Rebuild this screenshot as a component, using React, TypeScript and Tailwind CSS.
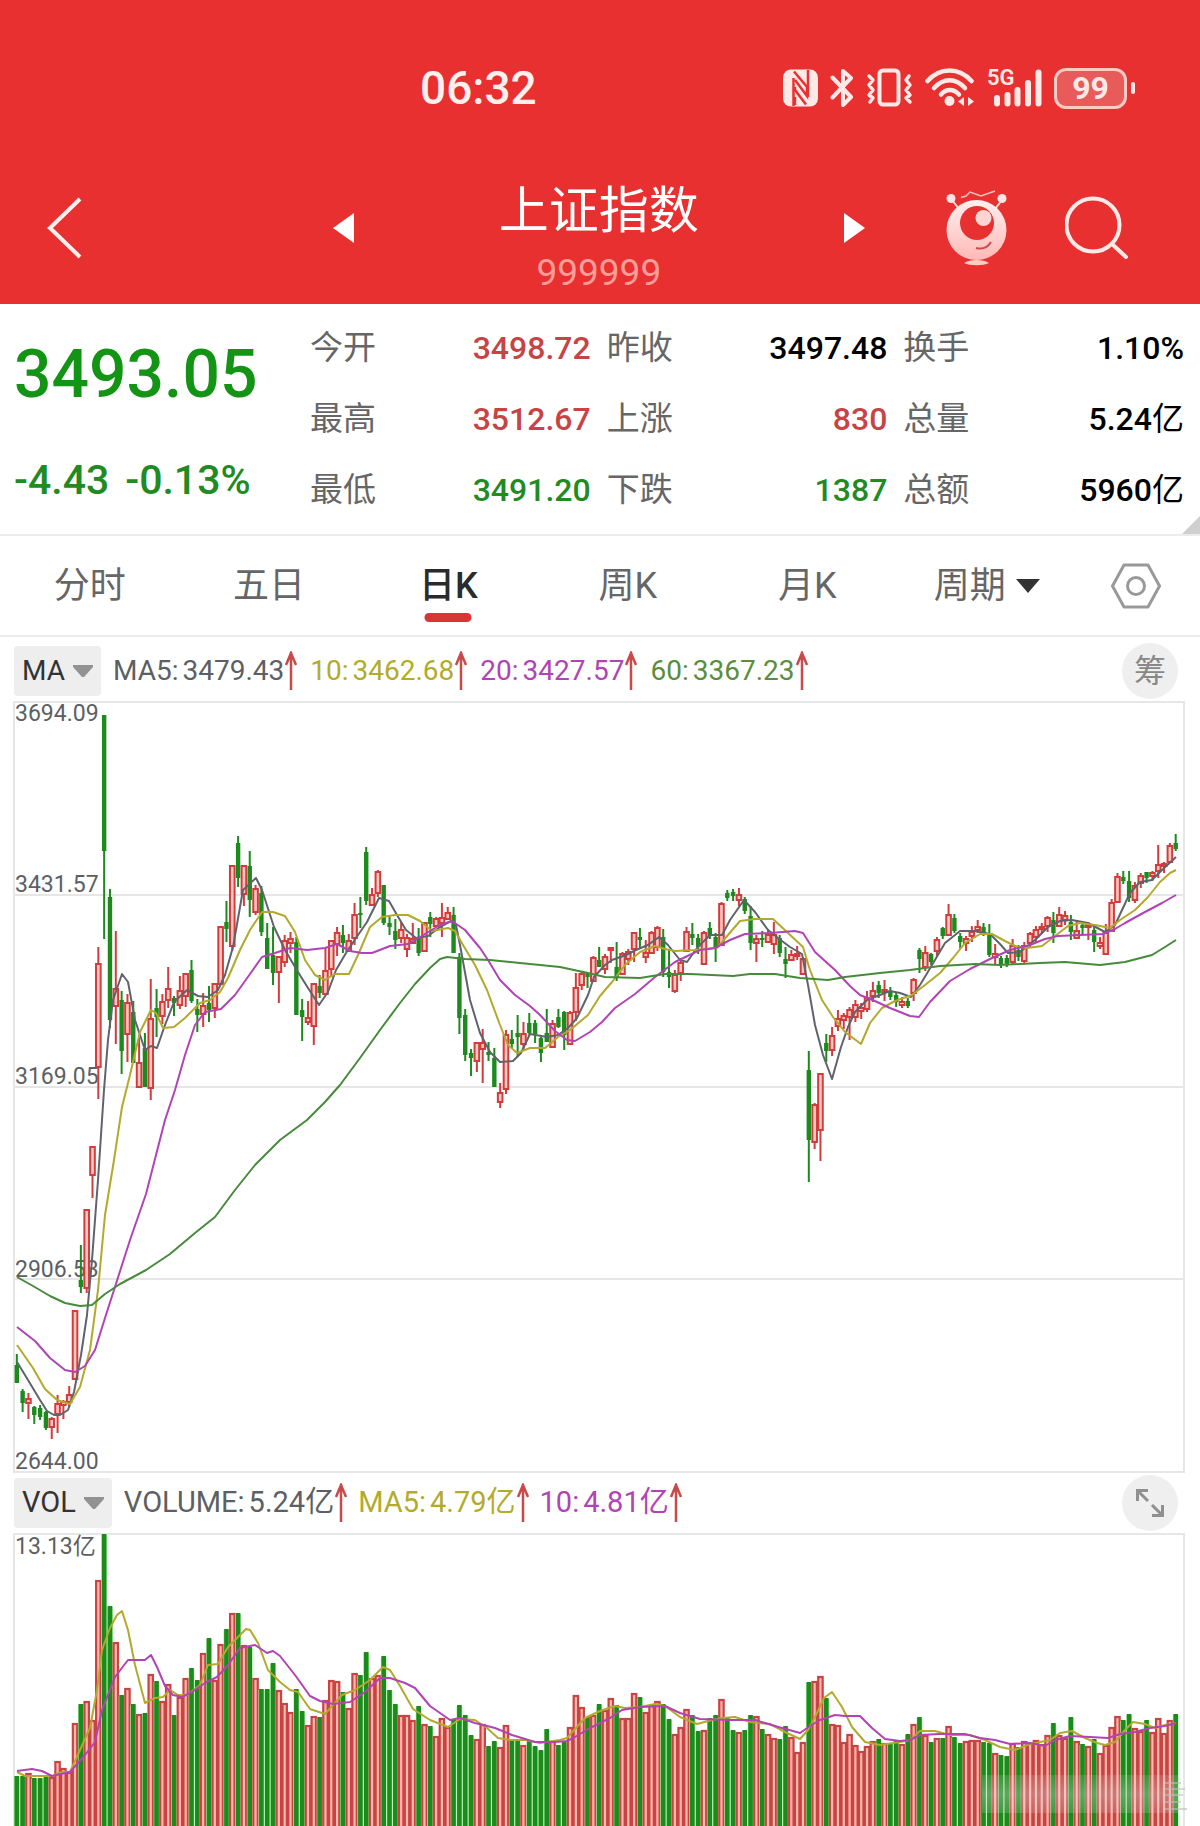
import React from "react";

const FONT = "font-[Roboto,'Noto_Sans_CJK_SC',sans-serif]";

const RED = "#d23c3c";
const GREEN = "#1c8a1c";

/* One entry per trading day: direction, high, body top, body bottom, low, volume top. */
const DAYS = `
G 1354 1365 1383 1383 1776|G 1389 1391 1403 1412 1776|R 1393 1398 1404 1419 1773|G 1406 1407 1415 1424 1778|G 1405 1408 1417 1420 1778
G 1411 1412 1428 1430 1777|R 1417 1418 1428 1439 1777|R 1395 1403 1415 1433 1761|R 1400 1401 1406 1419 1768|R 1386 1394 1403 1407 1772
R 1310 1310 1380 1380 1723|G 1245 1280 1287 1293 1704|R 1209 1209 1289 1293 1701|R 1146 1146 1176 1198 1720|R 947 963 1068 1099 1580
G 715 715 851 939 1534|G 889 897 1020 1028 1606|R 931 988 1007 1044 1642|G 991 1000 1051 1074 1695|R 994 1002 1035 1062 1688
G 1001 1012 1063 1063 1704|R 1035 1062 1088 1088 1714|G 1033 1048 1087 1087 1713|R 979 1018 1089 1100 1674|G 989 1008 1017 1037 1681
R 994 1001 1017 1024 1701|R 967 988 1001 1008 1684|G 996 998 1003 1016 1715|R 976 990 1006 1009 1697|R 973 973 997 1007 1678
G 960 970 1001 1003 1668|G 999 1009 1015 1032 1680|R 993 1005 1015 1027 1653|G 986 1003 1010 1022 1638|R 983 983 1009 1018 1680
R 926 926 985 985 1644|G 901 922 929 942 1629|R 865 865 947 951 1613|G 836 843 878 887 1613|R 865 865 895 906 1645
G 851 866 900 917 1647|R 885 888 913 915 1678|G 886 893 932 936 1689|G 923 938 969 969 1689|G 927 955 973 985 1663
R 956 956 973 1003 1690|R 935 940 963 967 1703|R 932 938 944 953 1712|G 937 942 1015 1015 1689|G 999 1010 1017 1041 1711
R 1001 1017 1023 1025 1725|R 983 983 1027 1045 1716|G 975 986 993 998 1717|R 948 970 995 995 1700|R 940 940 970 977 1680
R 927 932 945 956 1681|G 925 935 943 953 1692|R 934 940 952 952 1708|R 903 914 939 945 1673|G 897 913 915 928 1675
G 847 852 901 905 1652|R 888 894 906 906 1678|R 870 871 894 897 1675|G 885 885 923 925 1656|G 915 923 927 935 1690
G 919 931 940 949 1704|R 922 929 939 943 1715|R 934 937 950 957 1715|R 923 938 944 944 1720|G 928 937 953 956 1706
R 922 922 952 952 1724|G 912 917 924 937 1726|R 917 918 927 927 1736|R 903 917 924 937 1718|R 907 912 920 920 1727
G 907 915 953 953 1719|G 953 957 1018 1034 1705|G 1009 1015 1055 1061 1715|G 1049 1053 1058 1076 1735|R 1042 1042 1062 1072 1739
R 1029 1042 1050 1083 1724|G 1042 1052 1055 1061 1746|G 1048 1058 1087 1087 1741|R 1083 1092 1103 1108 1747|R 1030 1034 1090 1094 1725
G 1030 1039 1044 1048 1740|G 1015 1033 1037 1057 1739|R 1022 1033 1045 1050 1745|G 1013 1023 1033 1035 1741|G 1020 1023 1034 1043 1746
G 1037 1038 1053 1062 1750|G 1009 1033 1042 1042 1729|R 1020 1023 1048 1048 1741|G 1009 1017 1027 1028 1745|G 1011 1012 1035 1050 1742
R 1011 1012 1045 1045 1727|R 973 987 1013 1021 1695|R 972 973 986 990 1707|G 972 973 977 988 1717|R 956 957 982 982 1715
G 947 960 967 967 1704|R 954 956 970 974 1710|R 947 947 951 963 1698|G 942 967 977 981 1705|R 952 953 975 975 1718
R 949 951 960 965 1718|R 932 932 950 962 1693|G 928 937 940 949 1697|R 940 952 958 963 1712|R 931 932 954 954 1705
R 926 927 948 951 1701|G 929 937 972 977 1704|G 949 972 977 988 1719|R 970 974 992 993 1734|R 958 962 974 981 1727
R 927 931 952 952 1709|G 923 934 938 945 1715|G 934 938 947 954 1731|R 931 932 965 965 1730|G 922 928 936 939 1718
G 933 937 947 962 1715|R 902 903 946 946 1699|G 890 893 898 901 1717|G 889 892 896 901 1730|R 888 894 901 906 1732
G 897 899 911 914 1730|G 906 916 943 950 1715|R 935 938 944 962 1716|G 931 938 940 947 1729|R 929 934 943 943 1734
R 922 934 945 954 1738|G 935 938 953 957 1739|G 947 959 964 978 1726|R 950 954 961 961 1737|R 946 953 957 960 1752
R 957 958 975 975 1742|G 1051 1070 1140 1182 1682|R 1103 1104 1143 1149 1681|R 1073 1073 1131 1161 1676|G 1034 1043 1051 1062 1698
R 1027 1035 1051 1056 1724|R 1010 1018 1027 1031 1725|R 1013 1015 1021 1029 1742|R 1007 1009 1018 1040 1734|R 1000 1004 1018 1022 1745
R 1003 1007 1012 1019 1751|R 991 997 1010 1012 1746|R 982 990 997 1002 1741|G 981 985 993 998 1739|R 980 989 993 1001 1743
G 987 991 997 1000 1743|G 992 995 1002 1007 1740|R 997 1001 1006 1008 1744|G 998 1001 1006 1008 1734|R 978 979 994 1001 1724
G 948 950 959 973 1717|R 946 952 968 971 1735|G 953 954 962 965 1742|R 937 939 952 957 1738|G 927 928 936 939 1738
R 904 914 936 936 1726|G 914 918 931 933 1737|G 933 936 942 949 1743|R 936 938 944 951 1741|R 926 931 937 942 1740
R 920 926 931 933 1740|G 923 927 933 936 1742|G 924 934 955 957 1743|R 944 953 958 964 1753|G 956 958 965 968 1755
G 955 958 964 967 1756|R 939 945 963 965 1743|G 945 950 957 961 1747|R 942 945 962 963 1741|R 932 933 944 947 1743
R 926 929 938 942 1740|R 923 926 930 934 1744|R 916 917 927 932 1735|G 912 920 933 943 1723|R 907 914 927 927 1735
R 911 915 921 925 1738|G 915 922 932 940 1717|R 920 930 939 939 1741|G 922 925 928 934 1744|R 922 924 928 940 1746
G 925 930 942 952 1739|R 937 942 947 949 1753|R 924 932 955 955 1745|R 899 902 932 932 1727|R 873 876 903 903 1716
G 871 877 881 884 1720|G 871 881 898 902 1714|R 882 885 901 903 1728|R 873 875 884 888 1731|G 872 872 878 883 1720
R 871 872 877 881 1732|R 845 864 872 878 1718|R 862 863 867 873 1733|R 843 845 863 863 1720|G 834 843 849 851 1714`
  .trim()
  .split(/[|\n]/)
  .map((row, i) => {
    const [dir, ...n] = row.split(" ");
    const [high, top, bottom, low, vol] = n.map(Number);
    return { x: 16.8 + i * 5.8236, up: dir === "R", high, top, bottom, low, vol };
  });

const PRICE_LINES = [
  {
    color: "#5f636e",
    points:
      "17,1362 28,1380 40,1400 47,1411 54,1415 60,1415 68,1410 74,1392 81,1355 87,1315 92,1260 98,1180 104,1090 108,1040 113,1000 122,974 128,982 135,1020 140,1035 145,1050 151,1046 157,1048 165,1025 174,1002 187,990 198,996 208,997 218,990 225,975 233,947 243,890 256,878 262,890 274,927 285,950 298,972 308,988 319,1005 328,992 336,970 346,953 356,938 367,922 379,898 389,901 397,915 406,930 416,938 428,936 440,927 451,921 456,925 460,945 470,1000 480,1033 490,1052 500,1062 513,1061 521,1053 530,1034 547,1037 558,1035 568,1028 577,1018 588,995 594,977 605,965 612,960 626,955 636,950 648,945 659,937 668,945 680,960 687,962 697,948 710,935 722,935 730,920 744,900 755,912 768,930 778,938 790,947 802,954 808,985 815,1025 823,1055 832,1079 841,1047 848,1027 855,1012 867,1000 880,995 890,991 900,993 911,997 920,985 932,965 945,943 960,931 975,931 990,934 1000,944 1008,953 1020,952 1035,940 1048,927 1060,921 1072,920 1088,923 1105,932 1115,925 1130,893 1140,882 1152,880 1162,870 1176,857",
  },
  {
    color: "#b3a92c",
    points:
      "17,1345 33,1368 45,1389 57,1400 70,1404 80,1387 90,1350 98,1290 105,1215 114,1160 122,1107 130,1075 140,1032 151,1010 156,1013 163,1028 174,1027 185,1018 200,1003 210,1000 220,992 228,978 240,950 250,930 262,912 273,912 285,916 295,932 305,960 315,975 325,980 335,974 349,974 358,955 370,927 382,917 395,915 408,915 420,921 432,931 448,928 455,931 463,945 475,965 487,990 500,1025 508,1045 517,1053 530,1048 545,1048 558,1037 570,1030 588,1015 600,996 612,982 625,965 640,952 655,946 665,949 675,951 695,950 717,948 728,935 740,921 755,919 773,919 788,933 803,947 810,970 822,1000 833,1017 845,1032 861,1044 870,1023 882,1008 895,1001 912,995 925,985 940,973 953,958 965,943 980,934 992,934 1005,941 1015,946 1027,948 1042,946 1055,936 1068,926 1080,923 1095,925 1110,928 1120,920 1135,910 1148,897 1160,882 1170,873 1176,870",
  },
  {
    color: "#b044b4",
    points:
      "17,1327 35,1341 50,1358 65,1370 75,1372 85,1366 95,1350 105,1318 114,1290 130,1240 146,1194 165,1120 175,1090 185,1055 195,1025 205,1012 221,1009 235,995 250,974 262,957 275,953 290,948 307,950 325,948 337,944 350,951 362,953 372,953 390,946 408,944 420,937 440,925 452,921 465,930 480,948 488,960 500,980 515,995 530,1006 540,1015 555,1031 567,1040 575,1041 590,1032 602,1022 615,1008 635,994 655,977 675,962 700,950 715,948 730,940 745,934 770,933 795,931 803,933 815,952 835,970 850,986 860,995 875,1001 890,1008 910,1016 919,1017 930,1002 950,981 970,969 990,959 1010,950 1030,945 1045,939 1058,936 1080,935 1103,934 1115,929 1125,923 1145,912 1162,903 1176,895",
  },
  {
    color: "#478a3c",
    points:
      "17,1277 33,1286 50,1296 65,1303 80,1306 92,1305 105,1294 120,1284 146,1270 170,1254 195,1233 215,1217 235,1190 255,1165 280,1140 307,1120 325,1102 340,1085 360,1058 380,1030 400,1003 415,984 430,968 440,959 447,957 465,959 490,960 520,963 560,967 588,973 605,977 640,978 665,974 690,974 733,976 750,974 775,974 800,978 828,980 845,977 880,973 910,970 940,966 975,964 1000,965 1040,963 1065,962 1100,965 1125,962 1152,955 1165,947 1176,940",
  },
];

const VOLUME_LINES = [
  {
    color: "#b3a92c",
    points:
      "17,1772 25,1776 45,1776 52,1776 62,1772 70,1772 80,1750 90,1728 97,1690 102,1650 110,1628 117,1615 122,1611 128,1630 135,1665 145,1703 155,1698 163,1697 170,1690 178,1695 187,1695 200,1685 208,1665 218,1664 228,1647 240,1635 246,1629 250,1630 258,1643 268,1670 280,1682 290,1690 298,1692 310,1709 325,1714 333,1705 342,1695 355,1690 370,1680 383,1667 390,1670 400,1686 413,1709 430,1720 448,1727 460,1719 475,1720 487,1728 498,1738 510,1740 525,1740 540,1743 560,1740 567,1738 575,1729 585,1718 600,1711 615,1706 625,1708 640,1707 655,1704 665,1706 680,1717 697,1724 712,1720 722,1718 735,1717 750,1722 770,1724 785,1732 800,1739 808,1730 816,1715 824,1698 832,1692 842,1707 852,1727 865,1742 880,1745 900,1742 910,1740 920,1731 935,1731 950,1735 970,1735 985,1740 1000,1747 1015,1750 1030,1744 1050,1740 1060,1733 1072,1731 1085,1738 1097,1743 1105,1745 1115,1742 1125,1730 1133,1722 1145,1724 1155,1728 1165,1725 1176,1723",
  },
  {
    color: "#b044b4",
    points:
      "17,1771 32,1769 42,1771 52,1776 70,1772 85,1755 95,1742 102,1710 115,1677 128,1660 145,1660 151,1655 157,1667 165,1686 173,1695 182,1697 192,1692 205,1683 217,1677 228,1665 240,1648 255,1645 267,1653 273,1651 280,1656 295,1675 310,1696 320,1701 333,1704 350,1702 365,1692 380,1678 390,1678 405,1683 415,1688 430,1706 450,1720 460,1718 475,1723 495,1728 512,1735 535,1742 555,1742 567,1741 575,1737 590,1728 610,1718 622,1710 640,1707 665,1706 680,1713 700,1719 730,1720 755,1720 775,1726 800,1733 810,1726 820,1720 835,1715 845,1716 860,1716 872,1728 885,1739 900,1741 910,1740 920,1735 940,1734 965,1734 980,1738 995,1740 1010,1744 1030,1743 1045,1746 1055,1740 1070,1736 1090,1737 1108,1738 1120,1734 1135,1732 1150,1728 1165,1726 1176,1723",
  },
];

const QUOTES = [
  { label: "今开", value: "3498.72", tone: "text-[#c64444]" },
  { label: "昨收", value: "3497.48", tone: "text-black" },
  { label: "换手", value: "1.10%", tone: "text-black" },
  { label: "最高", value: "3512.67", tone: "text-[#c64444]" },
  { label: "上涨", value: "830", tone: "text-[#c64444]" },
  { label: "总量", value: "5.24", unit: "亿", tone: "text-black" },
  { label: "最低", value: "3491.20", tone: "text-[#228a22]" },
  { label: "下跌", value: "1387", tone: "text-[#228a22]" },
  { label: "总额", value: "5960", unit: "亿", tone: "text-black" },
];

function StatusIcons() {
  return (
    <div className="flex items-center gap-3 text-[#ffe9e7]">
      <svg className="h-10 w-[35px]" viewBox="0 0 35 40" fill="none" aria-label="NFC">
        <rect x="0" y="1.500" width="35" height="37" rx="8" fill="currentColor" />
        <path d="M10.500 38V10M25 2v27" stroke="#e83030" strokeWidth="2.500" />
        <path d="M11 3.500 24 19v9L12 12M12 19v3l11 14.500M12 29v8" stroke="#e83030" strokeWidth="2.500" />
      </svg>
      <svg className="h-10 w-6" viewBox="0 0 24 40" fill="none" stroke="currentColor" strokeWidth="4" strokeLinejoin="round" strokeLinecap="round" aria-label="蓝牙">
        <path d="M2.500 9.500 21 29l-8 8V3l8 7L2.500 29.500" />
      </svg>
      <svg className="h-10 w-[47px]" viewBox="0 0 47 40" fill="none" stroke="currentColor" strokeWidth="4" strokeLinecap="round" strokeLinejoin="round" aria-label="振动">
        <rect x="13.500" y="2.500" width="19" height="34" rx="3.500" />
        <path d="m3 8 4 4-4 5 4 5-4 5 4 3-3 4M43 8l-3 4 4 5-4 5 4 5-4 3 4 4" strokeWidth="3.500" />
      </svg>
      <svg className="h-10 w-[50px]" viewBox="0 0 50 40" fill="none" stroke="currentColor" strokeWidth="4.500" strokeLinecap="round" aria-label="无线网络">
        <path d="M2.500 13C15-1 34-1 46.500 13" />
        <path d="M9 20c9-10.500 22-10.500 31 0" />
        <path d="M16 26.500c5-6 12.500-6 18 0" />
        <circle cx="24.500" cy="33" r="5" fill="currentColor" stroke="none" />
        <path d="m33 33.500 6-4.500v9zM49 33.500 43 29v9z" fill="currentColor" stroke="none" />
      </svg>
      <div className="relative h-10 w-[55px]">
        <span className="absolute top-0 left-0 text-[22px] leading-5 font-semibold">5G</span>
        <svg className="h-10 w-[55px]" viewBox="0 0 55 40" stroke="currentColor" strokeWidth="6" strokeLinecap="round" aria-label="信号">
          <path d="M10 30v5.500M20.500 27v8.500M30.500 22v13.500M41 15v20.500M51.500 4.500v31" />
        </svg>
      </div>
      <div className="flex items-center gap-1">
        <span className="flex h-[41px] w-[73px] items-center justify-center rounded-xl border-3 border-[#ffc9c6] bg-[#e95a5a] text-[32px] font-bold">
          99
        </span>
        <span className="h-3 w-1 rounded-full bg-current" />
      </div>
    </div>
  );
}

function Mascot() {
  return (
    <svg className="h-[76px] w-16" viewBox="0 0 64 76" fill="none" aria-hidden="true">
      <defs>
        <linearGradient id="body" x1="0" y1="0" x2="0" y2="1">
          <stop offset="0" stopColor="#fff0ee" />
          <stop offset="1" stopColor="#ffb9b5" />
        </linearGradient>
      </defs>
      <path d="M16 7.500 21 6l4-4 11 4 14-5" stroke="#ffc3bf" strokeWidth="1.500" />
      <path d="m7 10 7 9M57 10l-7 9" stroke="#ffdedb" strokeWidth="2" />
      <circle cx="6" cy="8.500" r="4.500" fill="#ffe4e1" />
      <circle cx="57" cy="8.500" r="4.500" fill="#ffe4e1" />
      <circle cx="31.500" cy="40" r="30" fill="url(#body)" />
      <circle cx="32" cy="33" r="17" fill="#e83030" />
      <circle cx="38.500" cy="28" r="8" fill="#ffd5d2" />
      <path d="M31 58c8 2 12-1 15-6" stroke="#cc4b4b" strokeWidth="2" />
      <path d="M19 73c5-4 20-4 25 0-6 3-19 3-25 0Z" fill="#ffc9c6" />
    </svg>
  );
}

function UpArrow() {
  return (
    <svg className="h-10 w-3.5 shrink-0" viewBox="0 0 14 40" fill="none" stroke="#c94a4a" strokeWidth="2.500" aria-label="上升">
      <path d="M7 1v38M2 14 7 2l5 12" />
    </svg>
  );
}

function Reading({ name, value, tone }: { name: string; value: string; tone: string }) {
  return (
    <span className={`flex items-center ${tone}`}>
      <span className="mr-1">{name}:</span>
      <span>{value}</span>
      <UpArrow />
    </span>
  );
}

function Picker({ label }: { label: string }) {
  return (
    <button type="button" className="flex h-[50px] items-center gap-2 rounded-sm bg-[#eeeeee] px-2 text-[#333]">
      {label}
      <svg className="h-3 w-5" viewBox="0 0 20 12" fill="#929292" aria-hidden="true">
        <path d="M0 0h20v2l-9 10H9L0 2z" />
      </svg>
    </button>
  );
}

function Line({ color, points }: { color: string; points: string }) {
  return <polyline points={points} fill="none" stroke={color} strokeWidth="2" strokeLinejoin="round" />;
}

function PriceChart() {
  return (
    <svg className="block w-full" viewBox="0 701 1200 772" role="img" aria-label="日K线图">
      <g stroke="#e6e6e6" strokeWidth="2" fill="none">
        <rect x="14" y="702" width="1170" height="770" />
        <path d="M14 895h1170M14 1087h1170M14 1279h1170" />
      </g>
      <g fill="#5c5f63" fontSize="23">
        <text x="15" y="721">3694.09</text>
        <text x="15" y="892">3431.57</text>
        <text x="15" y="1084">3169.05</text>
        <text x="15" y="1277">2906.53</text>
        <text x="15" y="1469">2644.00</text>
      </g>
      {DAYS.map((d) =>
        d.up ? (
          <g key={d.x} stroke={RED} strokeWidth="2">
            <path d={`M${d.x} ${d.high}V${d.top}M${d.x} ${d.bottom}V${d.low}`} />
            <rect x={d.x - 2.3} y={d.top + 1} width="4.600" height={Math.max(d.bottom - d.top - 2, 2)} fill="#ffc9c2" />
          </g>
        ) : (
          <g key={d.x} fill={GREEN}>
            <rect x={d.x - 1} y={d.high} width="2" height={d.low - d.high} />
            <rect x={d.x - 2.2} y={d.top} width="4.400" height={Math.max(d.bottom - d.top, 2)} />
          </g>
        ),
      )}
      {PRICE_LINES.map((l) => (
        <Line key={l.color} {...l} />
      ))}
    </svg>
  );
}

function VolumeChart() {
  return (
    <svg className="block w-full" viewBox="0 1533 1200 293" role="img" aria-label="成交量图">
      <defs>
        <linearGradient id="veil" x1="0" y1="0" x2="0" y2="1">
          <stop offset="0" stopColor="#d8d8d8" stopOpacity="0.15" />
          <stop offset="0.5" stopColor="#d8d8d8" stopOpacity="0.36" />
          <stop offset="1" stopColor="#d8d8d8" stopOpacity="0.2" />
        </linearGradient>
      </defs>
      <path d="M14 1830V1534h1170v296" stroke="#e6e6e6" strokeWidth="2" fill="none" />
      <text x="15" y="1554" fill="#5c5f63" fontSize="23">
        13.13亿
      </text>
      {DAYS.map((d) =>
        d.up ? (
          <rect key={d.x} x={d.x - 2.2} y={d.vol + 1} width="4.400" height="300" fill="#ffb9ab" stroke="#c84444" strokeWidth="2.200" />
        ) : (
          <g key={d.x}>
            <rect x={d.x - 2.9} y={d.vol + 1} width="5.800" height="300" fill="#a6f0a0" />
            <rect x={d.x - 2.3} y={d.vol} width="4.600" height="300" fill={GREEN} />
          </g>
        ),
      )}
      {VOLUME_LINES.map((l) => (
        <Line key={l.color} {...l} />
      ))}
      <rect x="982" y="1775" width="196" height="38" fill="url(#veil)" />
      <path d="M1165 1783h16M1165 1789h20M1165 1795h18M1165 1802h16M1165 1809h22" stroke="#bdbdbd" strokeOpacity="0.6" strokeWidth="2" />
    </svg>
  );
}

export default function App() {
  return (
    <main className={`w-full overflow-hidden bg-white ${FONT}`}>
      <header className="bg-[#e83030] text-white">
        <div className="flex h-44 items-center justify-between pr-[65px] pl-[35%]">
          <time className="text-[46px] leading-none font-medium text-[#fff0ee]">06:32</time>
          <StatusIcons />
        </div>
        <div className="grid h-32 grid-cols-[29.5%_1fr_29.7%] items-start">
          <div className="flex h-26 items-center justify-between pl-[46px]">
            <button type="button" aria-label="返回">
              <svg className="h-[62px] w-9" viewBox="0 0 36 62" fill="none" stroke="#fff0ee" strokeWidth="4">
                <path d="M34 2 4 31l30 29" />
              </svg>
            </button>
            <button type="button" aria-label="上一个">
              <svg className="h-[30px] w-[21px]" viewBox="0 0 21 30" fill="#fff">
                <path d="M21 0v30L0 15z" />
              </svg>
            </button>
          </div>
          <div className="flex flex-col items-center pt-1">
            <h1 className="text-[50px] leading-[62px]">上证指数</h1>
            <p className="text-[37px] leading-[62px] text-[#ff9d99]">999999</p>
          </div>
          <div className="flex h-26 items-center">
            <button type="button" aria-label="下一个">
              <svg className="h-[30px] w-[21px]" viewBox="0 0 21 30" fill="#fff">
                <path d="M0 0v30l21-15z" />
              </svg>
            </button>
            <button type="button" className="ml-20" aria-label="智能助手">
              <Mascot />
            </button>
            <button type="button" className="ml-14" aria-label="搜索">
              <svg className="h-16 w-16" viewBox="0 0 64 64" fill="none" stroke="#ffe9e7" strokeWidth="4" strokeLinecap="round">
                <circle cx="28" cy="29" r="26.500" />
                <path d="m47 48 14 13" />
              </svg>
            </button>
          </div>
        </div>
      </header>

      <section className="relative flex h-[232px] border-b-2 border-[#ececec]">
        <div className="flex w-[310px] shrink-0 flex-col pl-3.5 text-[#149414]">
          <strong className="pt-[34px] text-[66px] leading-[74px] font-medium">3493.05</strong>
          <span className="flex gap-4 pt-[46px] text-[41px] leading-[44px] font-medium text-[#228a22]">
            <span>-4.43</span>
            <span>-0.13%</span>
          </span>
        </div>
        <dl className="grid flex-1 grid-cols-3 content-start gap-x-4 pt-2 pr-4">
          {QUOTES.map((q) => (
            <div key={q.label} className="flex h-[71px] items-center justify-between">
              <dt className="text-[33px] text-[#666]">{q.label}</dt>
              <dd className={`text-[32px] font-medium ${q.tone}`}>
                {q.value}
                {q.unit && <span className="font-normal">{q.unit}</span>}
              </dd>
            </div>
          ))}
        </dl>
        <svg className="absolute right-0 bottom-0 h-[18px] w-[18px]" viewBox="0 0 18 18" fill="#cfcfcf" aria-hidden="true">
          <path d="M18 0v18H0z" />
        </svg>
      </section>

      <nav className="flex h-[101px] items-center border-b-2 border-[#ececec] pr-1 text-4xl text-[#666]">
        <button type="button" className="w-[15%]">分时</button>
        <button type="button" className="w-[15%]">五日</button>
        <button type="button" className="relative w-[15%] font-medium text-[#2b2b2b]" aria-current="page">
          日K
          <span className="absolute -bottom-4 left-1/2 h-[9px] w-[47px] -translate-x-1/2 rounded-full bg-[#d63636]" />
        </button>
        <button type="button" className="w-[15%]">周K</button>
        <button type="button" className="w-[15%]">月K</button>
        <button type="button" className="flex w-[15%] items-center justify-center gap-2.5">
          周期
          <svg className="h-3.5 w-6" viewBox="0 0 24 14" fill="#333" aria-hidden="true">
            <path d="M0 0h24L12 14z" />
          </svg>
        </button>
        <button type="button" className="flex w-[10%] justify-center" aria-label="设置">
          <svg className="h-[46px] w-[50px]" viewBox="0 0 50 46" fill="none" stroke="#999" strokeWidth="3" strokeLinejoin="round">
            <path d="M13 2h24l11.500 21L37 44H13L1.500 23z" />
            <circle cx="25" cy="23" r="8.500" />
          </svg>
        </button>
      </nav>

      <div className="flex h-16 items-center pt-1 pr-[22px] pl-3.5 text-[28px] whitespace-nowrap">
        <Picker label="MA" />
        <div className="ml-3 flex flex-1 gap-3">
          <Reading name="MA5" value="3479.43" tone="text-[#5c5f63]" />
          <Reading name="10" value="3462.68" tone="text-[#b3ab2b]" />
          <Reading name="20" value="3427.57" tone="text-[#b044b4]" />
          <Reading name="60" value="3367.23" tone="text-[#5a8e3c]" />
        </div>
        <button type="button" className="flex size-14 items-center justify-center rounded-full bg-[#efefef] text-[32px] text-[#888]">
          筹
        </button>
      </div>
      <PriceChart />

      <div className="flex h-[60px] items-center pr-[22px] pl-3.5 text-[29px] whitespace-nowrap">
        <Picker label="VOL" />
        <div className="ml-3 flex flex-1 gap-2.5">
          <Reading name="VOLUME" value="5.24亿" tone="text-[#5c5f63]" />
          <Reading name="MA5" value="4.79亿" tone="text-[#b3ab2b]" />
          <Reading name="10" value="4.81亿" tone="text-[#b044b4]" />
        </div>
        <button type="button" className="flex size-14 items-center justify-center rounded-full bg-[#efefef]" aria-label="全屏">
          <svg className="size-7" viewBox="0 0 28 28" fill="none" stroke="#909090" strokeWidth="3">
            <path d="M12 1.500H1.500V12M2 2l10 10M16 26.500h10.500V16M26 26 16 16" />
          </svg>
        </button>
      </div>
      <VolumeChart />
    </main>
  );
}
